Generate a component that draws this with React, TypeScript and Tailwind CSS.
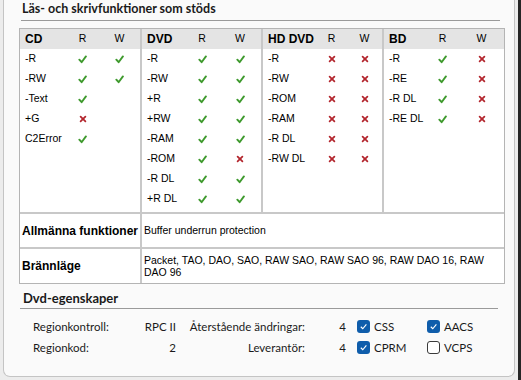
const ok = (
  <svg width="9" height="9" viewBox="0 0 10 10" className="inline-block">
    <path d="M1.5 5.2 L4 8 L8.8 1.6" fill="none" stroke="#3f9a2e" strokeWidth="2.1" strokeLinecap="round" strokeLinejoin="round" />
  </svg>
)

const no = (
  <svg width="8" height="8" viewBox="0 0 10 10" className="inline-block">
    <path d="M2 2 L8 8 M8 2 L2 8" fill="none" stroke="#b3262e" strokeWidth="2.2" strokeLinecap="round" />
  </svg>
)

type Row = [string, boolean | null, boolean | null]

const sections: { name: string; cols: string; rows: Row[] }[] = [
  {
    name: 'CD',
    cols: 'grid-cols-[44px_37px_37px]',
    rows: [
      ['-R', true, true],
      ['-RW', true, true],
      ['-Text', true, null],
      ['+G', false, null],
      ['C2Error', true, null],
    ],
  },
  {
    name: 'DVD',
    cols: 'grid-cols-[41px_38px_38px]',
    rows: [
      ['-R', true, true],
      ['-RW', true, true],
      ['+R', true, true],
      ['+RW', true, true],
      ['-RAM', true, true],
      ['-ROM', true, false],
      ['-R DL', true, true],
      ['+R DL', true, true],
    ],
  },
  {
    name: 'HD DVD',
    cols: 'grid-cols-[52px_33px_33px]',
    rows: [
      ['-R', false, false],
      ['-RW', false, false],
      ['-ROM', false, false],
      ['-RAM', false, false],
      ['-R DL', false, false],
      ['-RW DL', false, false],
    ],
  },
  {
    name: 'BD',
    cols: 'grid-cols-[39px_39px_39px]',
    rows: [
      ['-R', true, false],
      ['-RE', true, false],
      ['-R DL', true, false],
      ['-RE DL', true, false],
    ],
  },
]

function mark(v: boolean | null) {
  if (v === null) return null
  return v ? ok : no
}

function Section({ s }: { s: (typeof sections)[number] }) {
  return (
    <div className="flex flex-col">
      <div className={`grid ${s.cols} h-[20px] items-center bg-[#e4e4e4]`}>
        <span className="pl-[5px] text-[12px] font-bold whitespace-nowrap">{s.name}</span>
        <span className="text-center">R</span>
        <span className="text-center">W</span>
      </div>
      {s.rows.map(([label, r, w]) => (
        <div key={label} className={`grid ${s.cols} h-[20px] items-center`}>
          <span className="pl-[5px] whitespace-nowrap">{label}</span>
          <span className="flex justify-center">{mark(r)}</span>
          <span className="flex justify-center">{mark(w)}</span>
        </div>
      ))}
    </div>
  )
}

function Box({ on, label }: { on: boolean; label: string }) {
  return (
    <div className="flex items-center gap-[4px]">
      {on ? (
        <span className="w-[13px] h-[13px] rounded-[3px] bg-[#0f5dab] flex items-center justify-center">
          <svg width="9" height="9" viewBox="0 0 10 10">
            <path d="M2 5.3 L4.2 7.5 L8.2 2.7" fill="none" stroke="white" strokeWidth="1.3" />
          </svg>
        </span>
      ) : (
        <span className="w-[13px] h-[13px] rounded-[3px] border border-[#3a3a3a] bg-white" />
      )}
      <span>{label}</span>
    </div>
  )
}

export default function App() {
  return (
    <div className="w-[521px] h-[380px] bg-[#262626] overflow-hidden">
      <div className="w-[518px] h-[380px] bg-[#ececec] pl-[3px]">
        <div className="w-[512px] h-[377px] bg-[#fafafa] border-l border-r border-b border-[#c4c4c4] rounded-b-[7px] text-[#1a1a1a]">
          <div className="ml-[17px] w-[479px] h-[21px] border-b border-[#9a9a9a] pl-[1px] text-[12.5px] leading-[18px] font-bold font-['Lato',sans-serif]">
            Läs- och skrivfunktioner som stöds
          </div>

          <div className="ml-[15px] mt-[7px] w-[486px] border border-[#b4b4b4] bg-white text-[10.5px] text-black font-['Liberation_Sans',Arial,sans-serif]">
            <div className="grid grid-cols-[120px_2px_119px_2px_119px_2px_120px] h-[183px]">
              <Section s={sections[0]} />
              <div className="bg-[#c8c8c8]" />
              <Section s={sections[1]} />
              <div className="bg-[#c8c8c8]" />
              <Section s={sections[2]} />
              <div className="bg-[#c8c8c8]" />
              <Section s={sections[3]} />
            </div>
            <div className="h-[2px] bg-[#c8c8c8]" />
            <div className="grid grid-cols-[120px_2px_1fr] h-[33px] items-center">
              <span className="pl-[2px] text-[12px] font-bold">Allmänna funktioner</span>
              <div className="h-full bg-[#c8c8c8]" />
              <span className="pl-[2px]">Buffer underrun protection</span>
            </div>
            <div className="h-[2px] bg-[#c8c8c8]" />
            <div className="grid grid-cols-[120px_2px_1fr] h-[34px] items-center">
              <span className="pl-[2px] text-[12px] font-bold">Brännläge</span>
              <div className="h-full bg-[#c8c8c8]" />
              <span className="pl-[2px] pr-[10px] leading-[12px]">
                Packet, TAO, DAO, SAO, RAW SAO, RAW SAO 96, RAW DAO 16, RAW DAO 96
              </span>
            </div>
          </div>

          <div className="font-['Lato',sans-serif] text-[11.5px]">
            <div className="ml-[16px] mt-[6px] w-[478px] h-[19px] border-b border-[#9a9a9a] pl-[3px] text-[13px] leading-[17px] font-bold">
              Dvd-egenskaper
            </div>
            <div className="mt-[7px] pl-[29px] flex flex-col">
              <div className="flex items-center h-[21px]">
                <span className="w-[100px]">Regionkontroll:</span>
                <span className="w-[43px] text-right">RPC II</span>
                <span className="w-[129px] text-right">Återstående ändringar:</span>
                <span className="w-[41px] text-right">4</span>
                <div className="ml-[11px] w-[70px]"><Box on label="CSS" /></div>
                <Box on label="AACS" />
              </div>
              <div className="flex items-center h-[21px]">
                <span className="w-[100px]">Regionkod:</span>
                <span className="w-[43px] text-right">2</span>
                <span className="w-[129px] text-right">Leverantör:</span>
                <span className="w-[41px] text-right">4</span>
                <div className="ml-[11px] w-[70px]"><Box on label="CPRM" /></div>
                <Box on={false} label="VCPS" />
              </div>
            </div>
          </div>
        </div>
      </div>
    </div>
  )
}
